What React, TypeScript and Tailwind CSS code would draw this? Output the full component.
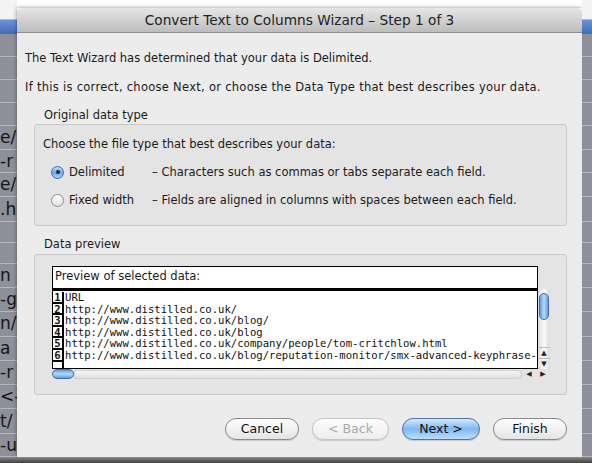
const leftRows: { h: number; t: string }[] = [
  { h: 23, t: '' },
  { h: 23, t: '' },
  { h: 23, t: '' },
  { h: 24, t: '' },
  { h: 24, t: 'e/' },
  { h: 23, t: '-r' },
  { h: 24, t: 'e/' },
  { h: 25, t: '.h' },
  { h: 21, t: '' },
  { h: 21, t: '' },
  { h: 24, t: 'n' },
  { h: 24, t: '-g' },
  { h: 25, t: 'n/' },
  { h: 25, t: 'a' },
  { h: 24, t: '-r' },
  { h: 24, t: '<-' },
  { h: 25, t: 't/' },
  { h: 23, t: '-u' },
];

const previewRows = [
  'URL',
  'http://www.distilled.co.uk/',
  'http://www.distilled.co.uk/blog/',
  'http://www.distilled.co.uk/blog',
  'http://www.distilled.co.uk/company/people/tom-critchlow.html',
  'http://www.distilled.co.uk/blog/reputation-monitor/smx-advanced-keyphrase-ranking',
];

const ui = { fontFamily: '"DejaVu Sans", "Liberation Sans", sans-serif' };
const mono = { fontFamily: '"DejaVu Sans Mono", "Liberation Mono", monospace' };

function SheetStrip({ width, showText }: { width: string; showText?: boolean }) {
  return (
    <div className={`${width} flex flex-col overflow-hidden shrink-0`}>
      <div className="h-[20px] bg-[#f3f3f3] border-b border-[#b5b5b5]" />
      <div className="h-[14px] bg-linear-to-b from-[#6d93d6] to-[#3f6bb8]" />
      {leftRows.map((r, i) => (
        <div
          key={i}
          className="bg-[#8d9098] border-b border-[#b3b6bd] text-[17px] leading-none text-[#151515] flex items-center whitespace-nowrap"
          style={{ height: r.h, ...ui }}
        >
          {showText ? r.t : ''}
        </div>
      ))}
      <div className="flex-1 bg-[#8d9098]" />
    </div>
  );
}

function Radio({ checked }: { checked?: boolean }) {
  return checked ? (
    <div className="w-[13px] h-[13px] rounded-full border border-[#3b6aa6] bg-linear-to-b from-[#c6e3fc] via-[#6aa9ea] to-[#a7d3fb] flex items-center justify-center shrink-0">
      <div className="w-[4px] h-[4px] rounded-full bg-[#142238]" />
    </div>
  ) : (
    <div className="w-[13px] h-[13px] rounded-full border border-[#8c8c8c] bg-linear-to-b from-[#ffffff] to-[#e2e2e2] shrink-0" />
  );
}

function Button({ label, primary, disabled }: { label: string; primary?: boolean; disabled?: boolean }) {
  const base = 'h-[22px] rounded-full flex items-center justify-center text-[12.5px] shadow-[0_1px_1px_rgba(0,0,0,0.15)]';
  const skin = primary
    ? 'border border-[#4f74a8] bg-linear-to-b from-[#d4eafd] via-[#7fb8ef] to-[#b9defc] text-[#111]'
    : disabled
      ? 'border border-[#c4c4c4] bg-linear-to-b from-[#fdfdfd] to-[#ededed] text-[#a9a9a9]'
      : 'border border-[#8a8a8a] bg-linear-to-b from-[#ffffff] via-[#f2f2f2] to-[#e4e4e4] text-[#111]';
  return <div className={`${base} ${skin}`}>{label}</div>;
}

export default function App() {
  return (
    <div className="w-[592px] h-[463px] overflow-hidden flex flex-col bg-white" style={ui}>
      <div className="flex h-[457px]">
        <SheetStrip width="w-[17px]" showText />

        {/* sheet dialog */}
        <div className="w-[565px] mt-[8px] flex flex-col shadow-[0_0_4px_rgba(0,0,0,0.45)]">
          <div className="h-[25px] rounded-t-[4px] bg-linear-to-b from-[#e6e6e6] to-[#bdbdbd] border-b border-[#8e8e8e] flex items-center justify-center text-[13.7px] text-[#222]">
            Convert Text to Columns Wizard – Step 1 of 3
          </div>

          <div className="flex-1 bg-[#ececec] pl-[8px] pr-[15px] text-[11.5px] leading-[14px] text-[#1b1b1b]">
            <p className="mt-[18px]">The Text Wizard has determined that your data is Delimited.</p>
            <p className="mt-[15px] tracking-[0.28px]">If this is correct, choose Next, or choose the Data Type that best describes your data.</p>

            <p className="mt-[14px] pl-[19px]">Original data type</p>
            <div className="mt-[2px] ml-[9px] h-[102px] rounded-[3px] border border-[#c9c9c9] bg-[#e4e4e4] pl-[8px] pt-[12px]">
              <p>Choose the file type that best describes your data:</p>
              <div className="mt-[13px] h-[16px] flex items-center">
                <div className="pl-[8px] w-[26px]">
                  <Radio checked />
                </div>
                <span className="w-[83px]">Delimited</span>
                <span>– Characters such as commas or tabs separate each field.</span>
              </div>
              <div className="mt-[12px] h-[16px] flex items-center">
                <div className="pl-[8px] w-[26px]">
                  <Radio />
                </div>
                <span className="w-[83px]">Fixed width</span>
                <span>– Fields are aligned in columns with spaces between each field.</span>
              </div>
            </div>

            <p className="mt-[11px] pl-[19px]">Data preview</p>
            <div className="mt-[3px] ml-[9px] h-[141px] rounded-[3px] border border-[#c9c9c9] bg-[#e4e4e4] pl-[17px] pt-[11px]">
              <div className="w-[486px] h-[23px] bg-white border border-black px-[2px] pt-[2px]">
                Preview of selected data:
              </div>
              <div className="flex">
                <div className="w-[486px] h-[80px] bg-white border border-black border-t-2 overflow-hidden pt-[1px]" style={mono}>
                  {previewRows.map((row, i) => (
                    <div key={i} className="flex h-[11.6px] text-[10.6px] leading-[11.6px] text-[#111] whitespace-nowrap">
                      <span className="w-[11px] shrink-0 border-r-2 border-b-2 border-black text-center leading-[10px] font-bold">
                        {i + 1}
                      </span>
                      <span className="pl-[1px]">{row}</span>
                    </div>
                  ))}
                  <div className="w-[11px] h-[10px] border-r-2 border-black" />
                </div>
                {/* vertical scroller */}
                <div className="w-[12px] h-[80px] bg-linear-to-r from-[#dcdcdc] via-[#fafafa] to-[#dcdcdc] flex flex-col items-center pt-[4px]">
                  <div className="w-[10px] h-[27px] rounded-full border border-[#3f6ea8] bg-linear-to-r from-[#5d9be0] via-[#b8dcfb] to-[#5d9be0]" />
                  <div className="flex-1" />
                  <div className="w-full border-t border-[#bdbdbd] text-[7px] leading-[10px] text-center text-[#222]">▲</div>
                  <div className="w-full border-t border-[#bdbdbd] text-[7px] leading-[10px] text-center text-[#222]">▼</div>
                </div>
              </div>
              {/* horizontal scroller */}
              <div className="w-[498px] h-[10px] flex items-center">
                <div className="w-[22px] h-[10px] rounded-full border border-[#3f6ea8] bg-linear-to-b from-[#5d9be0] via-[#b8dcfb] to-[#5d9be0]" />
                <div className="flex-1 h-[9px] rounded-r-full bg-linear-to-b from-[#f6f6f6] to-[#dedede] border border-[#cfcfcf]" />
                <div className="w-[14px] text-[7px] text-center text-[#222]">◀</div>
                <div className="w-[14px] text-[7px] text-center text-[#222]">▶</div>
              </div>
            </div>

            <div className="mt-[23px] flex justify-end gap-[13px]">
              <div className="w-[74px]"><Button label="Cancel" /></div>
              <div className="w-[77px]"><Button label="< Back" disabled /></div>
              <div className="w-[78px]"><Button label="Next >" primary /></div>
              <div className="w-[74px]"><Button label="Finish" /></div>
            </div>
          </div>
        </div>

        <SheetStrip width="w-[10px]" />
      </div>
      <div className="flex-1 bg-linear-to-b from-[#8a8a8a] to-[#3f3f3f]" />
    </div>
  );
}
